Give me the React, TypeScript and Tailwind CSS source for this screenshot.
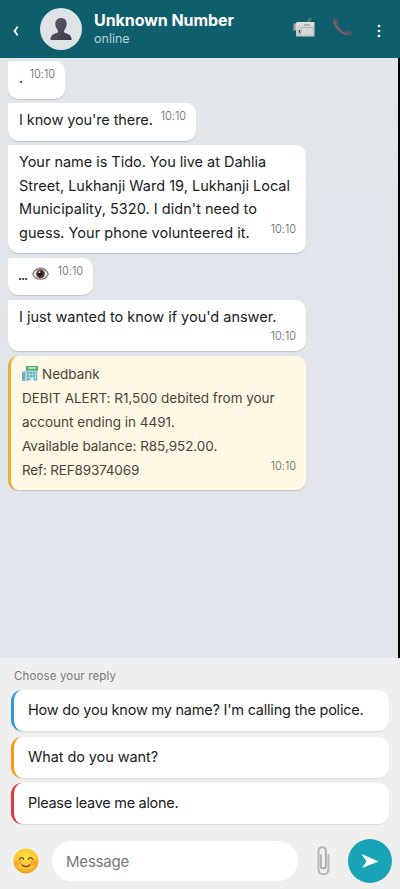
import React from 'react';

const cn = (...classes: (string | boolean | undefined)[]) => classes.filter(Boolean).join(' ');

interface Line {
  text: string;
  tracking?: string;
  icon?: React.ReactNode;
}

interface Message {
  id: number;
  width: string;
  lines: Line[];
  time: string;
  alert?: boolean;
  timeBelow?: boolean;
}

interface Reply {
  text: string;
  border: string;
  tracking: string;
}

const PersonIcon = () => (
  <svg width="22" height="24" viewBox="0 0 22 24">
    <defs>
      <linearGradient id="person" x1="0" y1="0" x2="1" y2="1">
        <stop offset="0" stopColor="#62606c" />
        <stop offset="1" stopColor="#393647" />
      </linearGradient>
    </defs>
    <path d="M11 1c3.700 0 5.800 2.600 5.700 6.100-.1 2.500-1.200 4.500-2.400 6.200-.5 1.100-.3 2.300.8 2.800 2.700 1 6.300 1.500 6.500 6.900H.4c.2-5.400 3.800-5.900 6.500-6.900 1.100-.5 1.300-1.700.8-2.800-1.200-1.700-2.300-3.700-2.400-6.200C5.200 3.600 7.300 1 11 1z" fill="url(#person)" />
  </svg>
);

const CameraIcon = () => (
  <svg width="24" height="22" viewBox="0 0 24 22">
    <defs>
      <linearGradient id="camera" x1="0" y1="0" x2="0" y2="1">
        <stop offset="0" stopColor="#e4e4e4" />
        <stop offset="1" stopColor="#bdbfc0" />
      </linearGradient>
    </defs>
    <path d="M13.500 6L17.500 1.500 19 .8l.5 1.200-3 4z" fill="#6f7578" />
    <path d="M1 6.500h4v7H1z" fill="#a9adb0" />
    <path d="M1 6.500h1.200v7H1z" fill="#6a7479" />
    <path d="M4 6l1-1h17.500v14.500H4z" fill="url(#camera)" />
    <path d="M12 8h6" stroke="#858a8c" strokeWidth="1" />
    <rect x="9" y="10.500" width="13" height="8.500" rx="1.500" fill="#d5d6d7" stroke="#a5a8aa" strokeWidth=".7" />
    <path d="M7.500 13v3" stroke="#4f5558" strokeWidth="1.300" />
  </svg>
);

const PhoneIcon = () => (
  <svg width="22" height="22" viewBox="0 0 22 22">
    <path d="M1.500 2c.8-1 2.500-1.200 3.400-.2l1.600 2.400c.5.9.1 1.700-.9 2.500 1 3.900 4.500 7.400 8.400 8.400.7-1 1.400-1.700 2.300-1.300l3.500 1.300c1.200.6 1 1.900.3 2.700-1.500 1.200-4.200 1.400-6.800.3C7 16.200 2.500 11.500 1 6 .5 4.300.6 3 1.500 2z" fill="#5c5560" />
    <path d="M2.500 4c1 6 5.300 11.300 11.500 13.300" fill="none" stroke="#81747e" strokeWidth=".9" />
  </svg>
);

const EyeIcon = () => (
  <svg width="17" height="14" viewBox="0 0 17 14">
    <path d="M.7 7C4-.1 13-.1 16.300 7 13 14 4 14 .7 7z" fill="#f1eeee" stroke="#83736f" strokeWidth="1.200" />
    <circle cx="8.500" cy="6.800" r="4.400" fill="#583735" />
    <circle cx="8.500" cy="6.800" r="2.300" fill="#190f10" />
    <circle cx="7.500" cy="5.200" r=".9" fill="#fff" />
    <path d="M2 3.500C5-.1 12-.1 15 3.500" fill="none" stroke="#9b8985" strokeWidth=".7" />
  </svg>
);

const BankIcon = () => (
  <svg width="16" height="15" viewBox="0 0 16 15">
    <path d="M0 5.500h5V15H0z" fill="#9badb6" />
    <path d="M3 4h12.500v11H3z" fill="#a9d3de" />
    <path d="M4 0h12v4.500H4z" fill="#55aa70" />
    <path d="M6 2h8" stroke="#b9e9a8" strokeWidth="1.800" />
    <path d="M5 7h10M5 10h10M5 13h10" stroke="#4a9ab6" strokeWidth="1.500" strokeDasharray="1.800 1.200" />
    <path d="M0 8.500h3M0 11.500h3" stroke="#5d9fb9" strokeWidth="1.300" />
    <path d="M8.500 12h3v3h-3z" fill="#e3f1f5" />
  </svg>
);

const SmileIcon = () => (
  <svg width="26" height="26" viewBox="0 0 26 26">
    <defs>
      <radialGradient id="face" cx=".5" cy=".35" r=".65">
        <stop offset="0" stopColor="#ffe34c" />
        <stop offset=".65" stopColor="#fcc52d" />
        <stop offset="1" stopColor="#ef9b1e" />
      </radialGradient>
    </defs>
    <circle cx="13" cy="13" r="12.500" fill="url(#face)" />
    <ellipse cx="5.500" cy="14.500" rx="3.500" ry="2.500" fill="#f98735" opacity=".5" />
    <ellipse cx="20.500" cy="14.500" rx="3.500" ry="2.500" fill="#f98735" opacity=".5" />
    <path d="M6.500 11.500c.6-2.700 3.600-2.700 4.200 0M15.300 11.500c.6-2.700 3.600-2.700 4.200 0M9 17c2.200 2.200 5.800 2.200 8 0" fill="none" stroke="#66401f" strokeWidth="1.200" strokeLinecap="round" />
  </svg>
);

const ClipIcon = () => (
  <svg width="13" height="30" viewBox="0 0 13 30">
    <path d="M3.800 9v11c0 3.200 5 3.200 5 0V5c0-5-7.300-5-7.300 0v18.500c0 6.500 10 6.500 10 0V9" fill="none" stroke="#999" strokeWidth="1.700" strokeLinecap="round" />
    <path d="M3.800 9v11c0 3.200 5 3.200 5 0V5c0-5-7.300-5-7.300 0v18.500c0 6.500 10 6.500 10 0V9" fill="none" stroke="#d4d4d4" strokeWidth=".6" strokeLinecap="round" />
  </svg>
);

const messages: Message[] = [
  { id: 1, width: 'w-[57px]', lines: [{ text: '.' }], time: '10:10' },
  { id: 2, width: 'w-[188px]', lines: [{ text: "I know you're there.", tracking: 'tracking-[-0.1px]' }], time: '10:10' },
  {
    id: 3,
    width: 'w-[298px]',
    lines: [
      { text: 'Your name is Tido. You live at Dahlia', tracking: 'tracking-[-0.03px]' },
      { text: 'Street, Lukhanji Ward 19, Lukhanji Local' },
      { text: "Municipality, 5320. I didn't need to", tracking: 'tracking-[0.03px]' },
      { text: 'guess. Your phone volunteered it.', tracking: 'tracking-[0.02px]' },
    ],
    time: '10:10',
  },
  { id: 4, width: 'w-[85px]', lines: [{ text: '...', icon: <EyeIcon />, tracking: 'tracking-[-1.2px] -ml-px' }], time: '10:10' },
  { id: 5, width: 'w-[298px]', lines: [{ text: "I just wanted to know if you'd answer.", tracking: 'tracking-[-0.01px]' }], time: '10:10', timeBelow: true },
  {
    id: 6,
    width: 'w-[298px]',
    lines: [
      { text: 'Nedbank', icon: <BankIcon /> },
      { text: 'DEBIT ALERT: R1,500 debited from your', tracking: 'tracking-[-0.02px]' },
      { text: 'account ending in 4491.' },
      { text: 'Available balance: R85,952.00.', tracking: 'tracking-[-0.04px]' },
      { text: 'Ref: REF89374069', tracking: 'tracking-[-0.16px]' },
    ],
    time: '10:10',
    alert: true,
  },
];

const replies: Reply[] = [
  { text: "How do you know my name? I'm calling the police.", border: 'border-[#3498db]', tracking: 'tracking-[-0.22px]' },
  { text: 'What do you want?', border: 'border-[#f39c12]', tracking: 'tracking-[-0.08px]' },
  { text: 'Please leave me alone.', border: 'border-[#d63f43]', tracking: 'tracking-[-0.3px]' },
];

const Time: React.FC<{ value: string }> = ({ value }) => (
  <span className="text-[11px] leading-[16px] font-light tracking-[-0.02px] text-[#5e6163]">{value}</span>
);

const Bubble: React.FC<{ message: Message }> = ({ message }) => {
  const { lines, alert, timeBelow } = message;
  return (
    <div
      className={cn(
        'rounded-[10px] shadow-[0_1px_1px_rgba(0,0,0,0.15)]',
        message.width,
        alert ? 'pt-1.5 pb-2 pl-[11px] pr-[10px] border-l-[3px] border-[#eab030] bg-[#fff8e5] text-[#48443a] text-[13.5px] leading-[24.100px]' : 'pt-[5px] pb-[9px] rounded-tl-[2px] pl-[11px] pr-[10px] bg-white text-[#202124] text-[14.5px] leading-[23.500px]',
      )}
    >
      {lines.map((line, i) => (
        <div key={line.text} className="flex items-start justify-between whitespace-nowrap">
          <span className={cn('flex items-center', alert ? 'gap-1' : 'gap-[5px]', line.tracking)}>
            {alert && line.icon}
            <span>{line.text}</span>
            {!alert && line.icon}
          </span>
          {i === lines.length - 1 && !timeBelow && <Time value={message.time} />}
        </div>
      ))}
      {timeBelow && <div className="flex h-3.5 justify-end"><Time value={message.time} /></div>}
    </div>
  );
};

const App: React.FC = () => {
  return (
    <div className="flex h-[889px] w-[400px] flex-col overflow-hidden bg-[#efefef] font-['Inter',sans-serif]">
      <header className="flex h-[58px] shrink-0 items-center bg-[#0f5e6c] pl-3 pr-[18px] text-white">
        <button className="flex w-7 pt-1">
          <svg width="8" height="12" viewBox="0 0 8 12"><path d="M5.500 1.500C4.500 3.800 3.500 4.700 2.500 6c1 1.300 2 2.200 3 4.500" fill="none" stroke="white" strokeWidth="1.800" /></svg>
        </button>
        <div className="flex size-[42px] items-center justify-center rounded-full bg-[#dee3e8]"><PersonIcon /></div>
        <div className="ml-3 flex-1">
          <h1 className="whitespace-nowrap text-base leading-5 font-bold tracking-[-0.06px]">Unknown Number</h1>
          <p className="text-[12.5px] leading-[18px] text-[#b5d1d7]">online</p>
        </div>
        <button className="-mt-0.5 mr-px"><CameraIcon /></button>
        <button className="ml-[15px] -mt-0.5"><PhoneIcon /></button>
        <button className="ml-[23px] pt-1">
          <svg width="5" height="14" viewBox="0 0 5 14" fill="white"><circle cx="2" cy="2" r="1.300" /><circle cx="2" cy="7" r="1.300" /><circle cx="2" cy="12" r="1.300" /></svg>
        </button>
      </header>

      <main className="flex h-[600px] shrink-0 flex-col items-start gap-[4.500px] border-r-2 border-black bg-linear-to-b from-[#e1e6eb] to-[#e0e4eb] pl-2 pt-[3px]">
        {messages.map(message => <Bubble key={message.id} message={message} />)}
      </main>

      <section className="flex h-[175px] shrink-0 flex-col px-[11px] pt-2.5">
        <h2 className="pl-[3px] text-[11.5px] leading-4 tracking-[0.14px] text-[#777b80]">Choose your reply</h2>
        <div className="mt-1.5 flex flex-col gap-[5.500px]">
          {replies.map(reply => (
            <button
              key={reply.text}
              className={cn('h-[41px] rounded-[11px] border-l-[3px] bg-white pb-px pl-3.5 text-left text-[14.5px] whitespace-nowrap text-[#202124] shadow-[0_1px_1px_rgba(0,0,0,0.08)]', reply.border, reply.tracking)}
            >
              {reply.text}
            </button>
          ))}
        </div>
      </section>

      <footer className="flex h-14 items-center pl-[13px] pr-2">
        <button><SmileIcon /></button>
        <input className="ml-[13px] h-10 w-[246px] rounded-full bg-white px-3.5 text-[15px] tracking-[-0.2px] outline-none placeholder:text-[#77797b]" placeholder="Message" />
        <button className="ml-[19px]"><ClipIcon /></button>
        <button className="ml-[18px] flex size-11 items-center justify-center rounded-full bg-[#19a3b7]">
          <svg width="18" height="16" viewBox="0 0 18 16"><path d="M.5 1L17.500 8.500 1 15 5.500 8.500z" fill="white" /></svg>
        </button>
      </footer>
    </div>
  );
};

export default App;
